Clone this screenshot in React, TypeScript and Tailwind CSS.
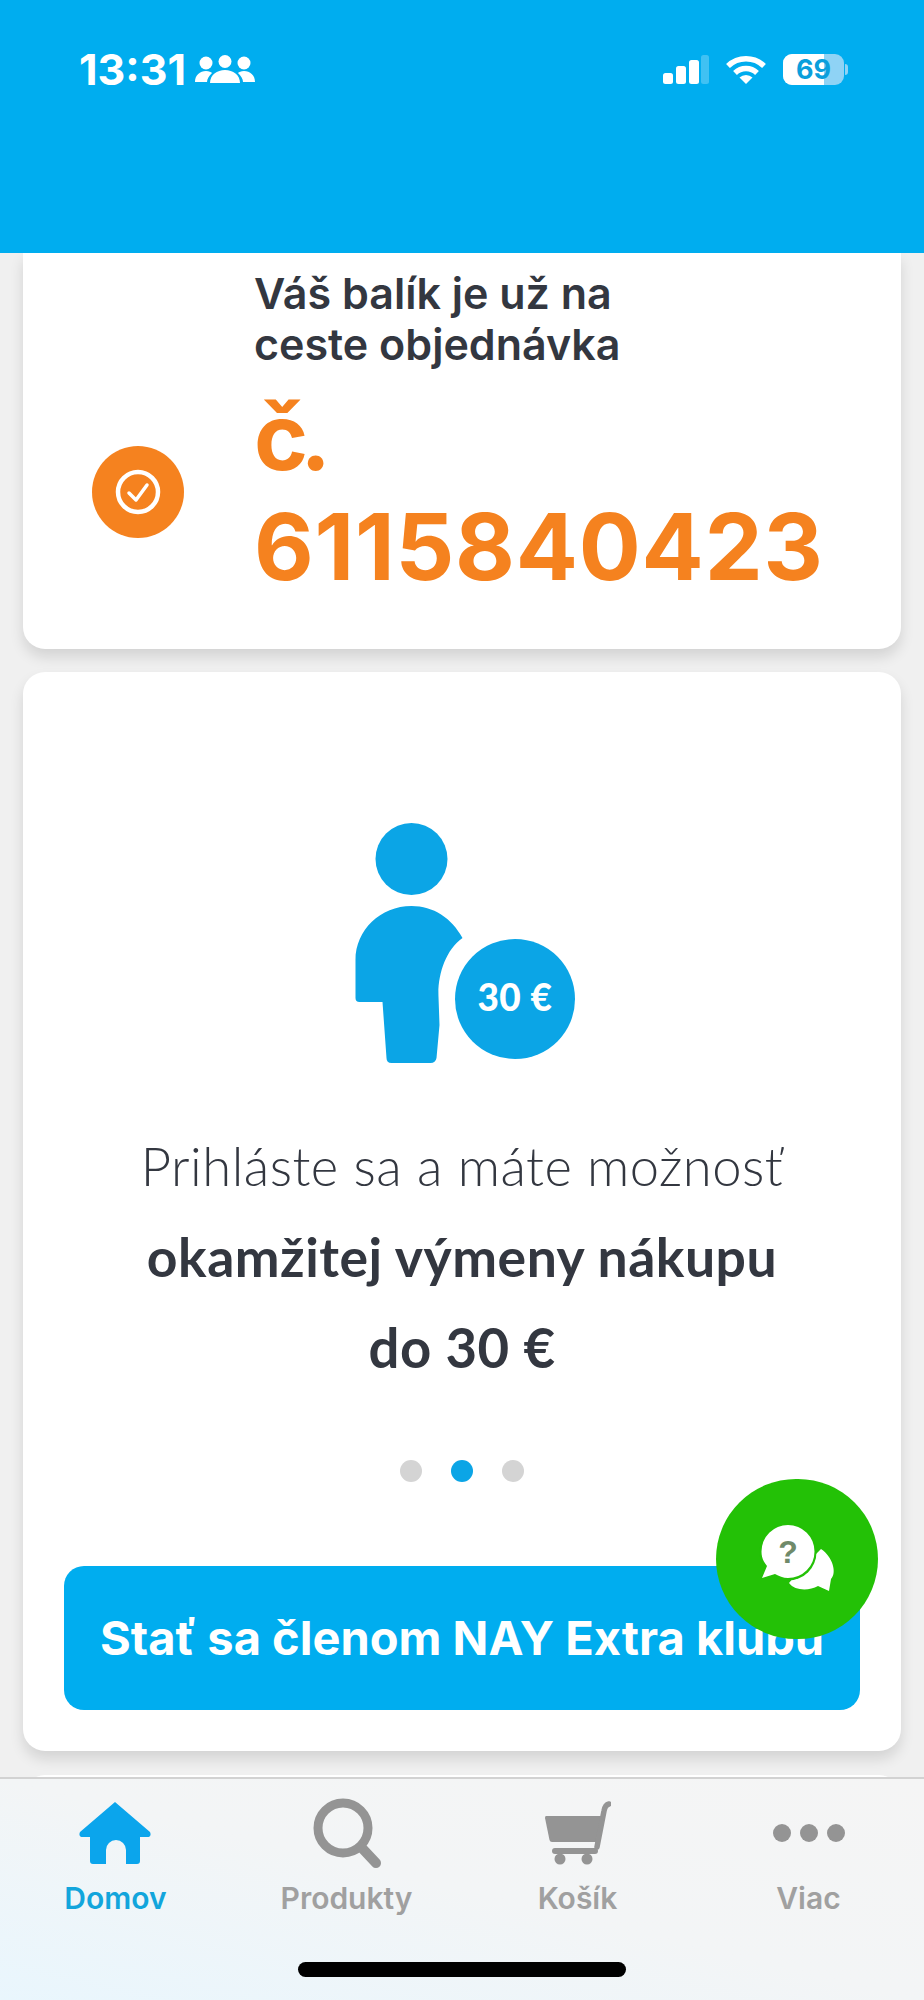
const inter = "font-['Inter','Liberation_Sans',sans-serif]";

function Group() {
  return (
    <svg width="60" height="28" viewBox="0 0 60 28" fill="#fff">
      <circle cx="11" cy="8" r="6.5" />
      <circle cx="30" cy="6.5" r="6.5" />
      <circle cx="49" cy="8" r="6.5" />
      <path d="M0 27 C0 20 5 16 11 16 C14 16 16 17 17 18 C14 21 12 24 12 27 Z" />
      <path d="M60 27 C60 20 55 16 49 16 C46 16 44 17 43 18 C46 21 48 24 48 27 Z" />
      <path d="M15 28 C15 20 22 15 30 15 C38 15 45 20 45 28 Z" />
    </svg>
  );
}

function Signal() {
  return (
    <svg width="46" height="29" viewBox="0 0 46 29" fill="#fff">
      <rect x="0" y="18" width="10" height="11" rx="2.5" />
      <rect x="13" y="11" width="10" height="18" rx="2.5" />
      <rect x="26" y="5" width="10" height="24" rx="2.5" />
      <rect x="38" y="0" width="8" height="29" rx="2.5" opacity="0.25" />
    </svg>
  );
}

function Wifi() {
  return (
    <svg width="40" height="29" viewBox="0 0 40 29" fill="none" stroke="#fff" strokeWidth="5.5">
      <path d="M2 11 A26 26 0 0 1 38 11" />
      <path d="M9 18 A16 16 0 0 1 31 18" />
      <path d="M20 29 L13.5 22.5 A9.5 9.5 0 0 1 26.5 22.5 Z" fill="#fff" stroke="none" />
    </svg>
  );
}

function Battery() {
  return (
    <div className="flex items-center">
      <div className="relative flex h-[31px] w-[61px] items-center justify-center overflow-hidden rounded-[9px] bg-[#8fd3f5]">
        <div className="absolute inset-y-0 left-0 w-[41px] bg-white" />
        <span className={`relative text-[27px] leading-none font-bold text-[#0a9fdc] ${inter}`}>69</span>
      </div>
      <div className="ml-[1px] h-[11px] w-[3px] rounded-r-full bg-[#8fd3f5]" />
    </div>
  );
}

function StatusBar() {
  return (
    <div className="flex items-center justify-between pt-[50px] pl-[79px] pr-[76px]">
      <div className="flex items-center gap-[9px]">
        <span className={`text-[43px] leading-[38px] font-bold text-white ${inter}`}>13:31</span>
        <Group />
      </div>
      <div className="flex items-center gap-[17px]">
        <Signal />
        <Wifi />
        <Battery />
      </div>
    </div>
  );
}

function CheckBadge() {
  return (
    <div className="mb-[111px] flex h-[92px] w-[92px] shrink-0 items-center justify-center self-end rounded-full bg-[#f5821f]">
      <svg width="46" height="46" viewBox="0 0 46 46" fill="none" stroke="#fff">
        <circle cx="23" cy="23" r="20" strokeWidth="4.5" />
        <path d="M14 24 L21 31 L32 16" strokeWidth="3.5" strokeLinecap="round" strokeLinejoin="round" />
      </svg>
    </div>
  );
}

function OrderCard() {
  return (
    <section className="flex h-[396px] rounded-b-[22px] bg-white pl-[69px] shadow-[0_8px_14px_rgba(0,0,0,0.12)]">
      <CheckBadge />
      <div className="ml-[70px] pt-[15px]">
        <p className={`text-[43px] leading-[51px] font-semibold text-[#333740] ${inter}`}>
          Váš balík je už na
          <br />
          ceste objednávka
        </p>
        <p className={`mt-[12px] text-[92px] leading-[110px] font-bold tracking-[0.8px] text-[#f5821f] ${inter}`}>
          <span className="tracking-[-8px]">č</span>.
          <br />
          6115840423
        </p>
      </div>
    </section>
  );
}

function PersonIcon() {
  return (
    <div className="relative h-[280px] w-[280px] shrink-0">
      <svg width="280" height="280" viewBox="1.5 0 280 280" fill="#0ba5e6">
        <circle cx="91" cy="59" r="36" />
        <path d="M35 160 C35 130 60 106 91 106 C113 106 131 118 142 138 C125 150 117 175 118 197 L119 225 L116 258 Q115 263 110 263 L71 263 Q66 263 66 258 L62 202 L39 202 Q35 202 35 198 Z" />
      </svg>
      <div className="absolute top-[139px] left-[133px] flex h-[120px] w-[120px] items-center justify-center rounded-full bg-[#0ba5e6] pb-[5px]">
        <span className="text-[37px] leading-none font-black tracking-[0.5px] text-white font-['Lato',sans-serif]">30 €</span>
      </div>
    </div>
  );
}

function Dots() {
  return (
    <div className="mt-[67px] flex gap-[29px]">
      <span className="h-[22px] w-[22px] rounded-full bg-[#d4d4d4]" />
      <span className="h-[22px] w-[22px] rounded-full bg-[#0ba5e6]" />
      <span className="h-[22px] w-[22px] rounded-full bg-[#d4d4d4]" />
    </div>
  );
}

function PromoCard() {
  return (
    <section className="mt-[23px] flex h-[1079px] flex-col items-center rounded-[22px] bg-white px-[41px] pt-[128px] shadow-[0_8px_14px_rgba(0,0,0,0.12)]">
      <PersonIcon />
      <div className="mt-[40px] text-center leading-[91px] text-[#333740] font-['Lato',sans-serif]">
        <p className="text-[52.5px] font-light tracking-[0.5px]">Prihláste sa a máte možnosť</p>
        <p className="text-[53.5px] font-bold tracking-[0.5px]">okamžitej výmeny nákupu</p>
        <p className="text-[54.5px] font-bold tracking-[0.5px]">do 30 €</p>
      </div>
      <Dots />
      <button className={`mt-[84px] h-[144px] w-full rounded-[20px] bg-[#00adef] text-[47px] font-bold whitespace-nowrap text-white ${inter}`}>
        Stať sa členom NAY Extra klubu
      </button>
    </section>
  );
}

function HomeIcon() {
  return (
    <svg width="72" height="62" viewBox="0 0 72 62" fill="#0ba5ec" className="-ml-[2px]">
      <path fillRule="evenodd" d="M36 0 L71 30 Q73 35 68 35 L61 35 L61 59 Q61 62 58 62 L47 62 L47 48 A10 10 0 0 0 27 48 L27 62 L14 62 Q11 62 11 59 L11 35 L4 35 Q-1 35 1 30 Z" />
    </svg>
  );
}

function SearchIcon() {
  return (
    <svg width="68" height="70" viewBox="0 0 68 70" fill="none" stroke="#949494">
      <circle cx="30" cy="30" r="25" strokeWidth="9" />
      <path d="M48 49 L63 65" strokeWidth="10" strokeLinecap="round" />
    </svg>
  );
}

function CartIcon() {
  return (
    <svg width="66" height="64" viewBox="0 0 66 64" fill="#949494">
      <path d="M1 15 H56 L51 41 H7 Q5 41 4.5 39 L0 17 Q0 15 1 15 Z" />
      <path d="M52 46 L59 10 Q60 4 64 3" fill="none" stroke="#949494" strokeWidth="5.5" strokeLinecap="round" />
      <path d="M10 50 H50" fill="none" stroke="#949494" strokeWidth="6" strokeLinecap="round" />
      <circle cx="15" cy="58" r="5.5" />
      <circle cx="42" cy="58" r="5.5" />
    </svg>
  );
}

function DotsIcon() {
  return (
    <svg width="72" height="20" viewBox="0 0 72 20" fill="#949494">
      <circle cx="9" cy="10" r="9" />
      <circle cx="36" cy="10" r="9" />
      <circle cx="63" cy="10" r="9" />
    </svg>
  );
}

function NavItem({ icon, label, active }: { icon: React.ReactNode; label: string; active?: boolean }) {
  return (
    <div className="flex flex-col items-center">
      <div className="flex h-[72px] items-center justify-center">{icon}</div>
      <span className={`mt-[12px] text-[30px] leading-[34px] font-semibold ${inter} ${active ? 'text-[#12a5dc]' : 'text-[#a0a0a0]'}`}>
        {label}
      </span>
    </div>
  );
}

function BottomNav() {
  return (
    <nav className="relative h-[223px] shrink-0 border-t-2 border-[#d2d2d2] bg-gradient-to-tr from-[#e9f6fd] via-[#f3f5f6] to-[#f5f5f5] pt-[18px]">
      <div className="grid grid-cols-4">
        <NavItem icon={<HomeIcon />} label="Domov" active />
        <NavItem icon={<SearchIcon />} label="Produkty" />
        <NavItem icon={<CartIcon />} label="Košík" />
        <NavItem icon={<DotsIcon />} label="Viac" />
      </div>
      <div className="absolute top-[183px] left-[298px] h-[15px] w-[328px] rounded-full bg-black" />
    </nav>
  );
}

function ChatButton() {
  return (
    <div className="absolute top-[1479px] left-[716px] flex h-[160px] w-[162px] items-center justify-center rounded-full bg-[#23c106] pb-[2px] pl-[4px]">
      <svg width="80" height="74" viewBox="0 0 80 74">
        <path d="M70 70 L59 65 C50 70 36 70 30 62 C40 50 50 40 62 28 C74 36 78 52 72 58 Z" fill="#fff" />
        <circle cx="29" cy="31" r="28.5" fill="#23c106" />
        <path d="M29 4 A26.5 26.5 0 0 1 29 57 C24 57 20 55 16 53 L3 57 L8 45 C4 40 2.5 36 2.5 30.5 A26.5 26.5 0 0 1 29 4 Z" fill="#fff" />
        <text x="29" y="42" textAnchor="middle" fontSize="32" fontWeight="700" fill="#6f8a6a" fontFamily="Liberation Sans, sans-serif">?</text>
      </svg>
    </div>
  );
}

export default function App() {
  return (
    <div className="relative flex h-[2000px] w-[924px] flex-col overflow-hidden bg-[#f0f0f0]">
      <header className="h-[253px] shrink-0 bg-[#00adef]">
        <StatusBar />
      </header>
      <main className="min-h-0 flex-1 overflow-hidden px-[23px]">
        <OrderCard />
        <PromoCard />
        <section className="mt-[24px] h-[40px] rounded-t-[22px] bg-white" />
      </main>
      <BottomNav />
      <ChatButton />
    </div>
  );
}
